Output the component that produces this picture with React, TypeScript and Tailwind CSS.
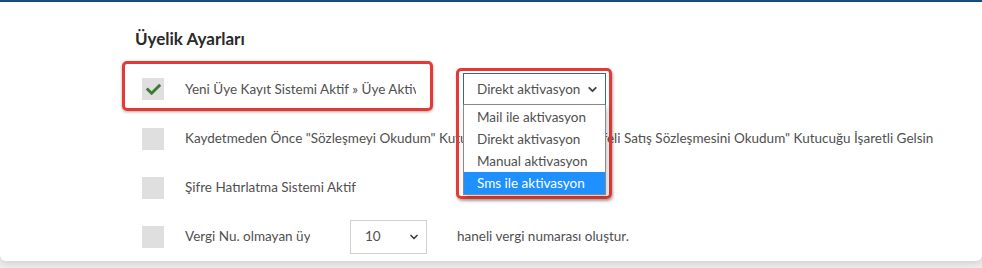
import React from 'react';
import { FaCheck } from 'react-icons/fa';
import { ChevronDown } from 'lucide-react';

const Box: React.FC<{ checked?: boolean }> = ({ checked }) => (
  <div className="flex items-center justify-center w-[22px] h-[22px] bg-[#dfdfdf] shrink-0">
    {checked && <FaCheck className="w-[15px] h-[15px] text-[#3f7a35]" />}
  </div>
);

const options = ['Mail ile aktivasyon', 'Direkt aktivasyon', 'Manual aktivasyon', 'Sms ile aktivasyon'];

const App: React.FC = () => {
  return (
    <div className="w-[982px] h-[268px] bg-[#ececec] overflow-hidden font-['Lato',sans-serif] text-[13.5px] text-[#505050]">
      <div className="h-[261px] bg-white border-t-2 border-[#1b4a7c] rounded-b-md shadow-[0_2px_6px_rgba(0,0,0,0.12)] pl-[135px] pt-[26px]">
        <h2 className="text-[17px] leading-[22px] font-bold text-[#2a2a2a]">Üyelik Ayarları</h2>

        {/* row 1 */}
        <div className="flex items-start mt-[11px] -ml-[13px]">
          <div className="flex items-start h-[50px] border-[3px] border-[#e53935] rounded-[5px] shadow-[0_1px_3px_rgba(0,0,0,0.35)] pl-[17px] pr-[14px] pt-[14px]">
            <Box checked />
            <span className="ml-[21px] w-[231px] overflow-hidden whitespace-nowrap leading-[22px]">
              Yeni Üye Kayıt Sistemi Aktif » Üye Aktivasyon Yöntemi
            </span>
          </div>
          <div className="relative ml-[30px] mt-[12px] z-10">
            <div className="absolute -left-[7px] -top-[5px] w-[156px] h-[131px] border-[3px] border-[#e53935] rounded-[5px] shadow-[1px_2px_3px_rgba(0,0,0,0.35)] pointer-events-none" />
            <div className="relative flex items-center justify-between w-[143px] h-[32px] bg-white border border-[#2c66b0] border-b-[#8a8a8a] pl-[13px] pr-[6px] whitespace-nowrap">
              <span>Direkt aktivasyon</span>
              <ChevronDown className="w-[13px] h-[13px] text-[#444]" strokeWidth={3.5} />
            </div>
            <ul className="absolute left-0 top-full w-[143px] bg-white border border-[#8a8a8a] border-t-0 pt-[1px] shadow-[2px_3px_5px_rgba(0,0,0,0.2)] whitespace-nowrap">
              {options.map((o, i) => (
                <li
                  key={o}
                  className={
                    i === 3
                      ? 'h-[22px] leading-[22px] pl-[13px] bg-[#1e90ff] text-white'
                      : 'h-[22px] leading-[22px] pl-[13px]'
                  }
                >
                  {o}
                </li>
              ))}
            </ul>
          </div>
        </div>

        {/* row 2 */}
        <div className="flex items-center h-[49px] mt-[3px] pl-[7px]">
          <Box />
          <span className="ml-[21px] whitespace-nowrap">
            Kaydetmeden Önce "Sözleşmeyi Okudum" Kutucuğu İle Birlikte, "Mesafeli Satış Sözleşmesini Okudum" Kutucuğu İşaretli Gelsin
          </span>
        </div>

        {/* row 3 */}
        <div className="flex items-center h-[49px] pl-[7px]">
          <Box />
          <span className="ml-[21px]">Şifre Hatırlatma Sistemi Aktif</span>
        </div>

        {/* row 4 */}
        <div className="flex items-center h-[49px] pl-[7px]">
          <Box />
          <span className="ml-[21px] w-[125px] overflow-hidden whitespace-nowrap">Vergi Nu. olmayan üyelere</span>
          <div className="flex items-center justify-between ml-[40px] w-[77px] h-[34px] border border-[#cfcfd6] pl-[14px] pr-[6px]">
            <span>10</span>
            <ChevronDown className="w-[12px] h-[12px] text-[#444]" strokeWidth={3.5} />
          </div>
          <span className="ml-[30px]">haneli vergi numarası oluştur.</span>
        </div>
      </div>
    </div>
  );
};

export default App;
